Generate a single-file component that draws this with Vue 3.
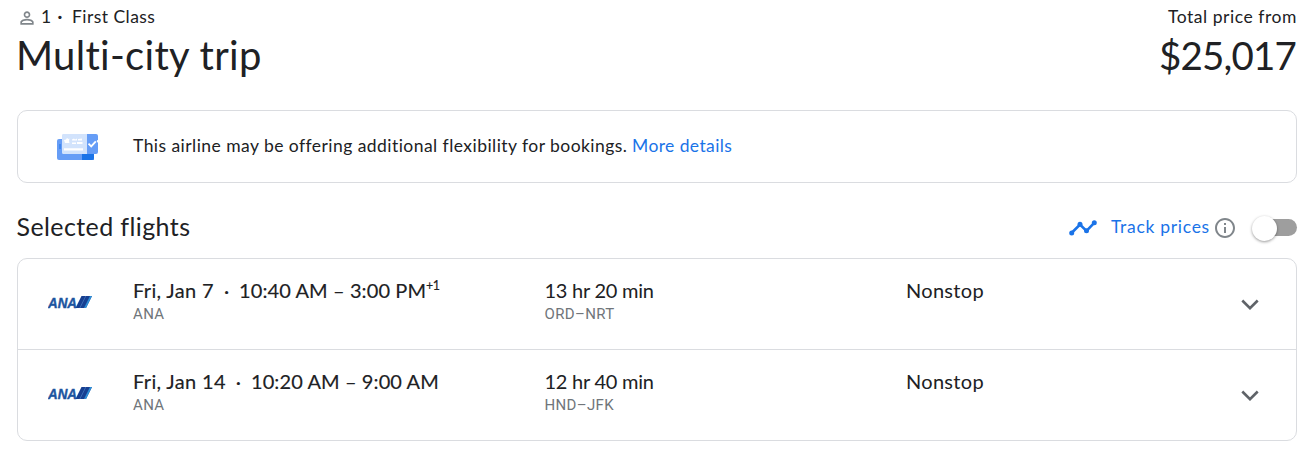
<template>
  <main class="trip">
    <header class="summary">
      <div class="summary-left">
        <div class="meta">
          <svg class="person" viewBox="0 0 24 24">
            <path d="M12 12c2.21 0 4-1.79 4-4s-1.79-4-4-4-4 1.79-4 4 1.79 4 4 4zm0-6c1.1 0 2 .9 2 2s-.9 2-2 2-2-.9-2-2 .9-2 2-2zm0 7c-2.67 0-8 1.34-8 4v3h16v-3c0-2.66-5.33-4-8-4zm6 5H6v-.99c.2-.72 3.3-2.01 6-2.01s5.8 1.29 6 2v1z" />
          </svg>
          <span class="count">1</span>
          <span class="meta-dot">·</span>
          <span class="cabin">First Class</span>
        </div>
        <h1 class="title">Multi-city trip</h1>
      </div>
      <div class="summary-right">
        <div class="price-label">Total price from</div>
        <div class="price">$25,017</div>
      </div>
    </header>

    <section class="banner">
      <svg class="tickets" viewBox="0 0 42 26">
        <path d="M2 5h35v21H2a2 2 0 0 1-2-2V7a2 2 0 0 1 2-2z" fill="#669df6" />
        <path d="M25 19h12v5a2 2 0 0 1-2 2H25z" fill="#1a73e8" />
        <path d="M3 10v5" stroke="#1a73e8" stroke-width="1" />
        <path d="M6 0h24v20H6a1.500 1.500 0 0 1-1-1.500v-17A1.500 1.500 0 0 1 6 0z" fill="#d2e3fc" />
        <path d="M30 0h9a2 2 0 0 1 2 2v4a1.200 1.200 0 0 0 0 2.500V18a2 2 0 0 1-2 2h-9z" fill="#669df6" />
        <path d="M7 14.200h19v2.200H7zM7 6l2-.5 1-1.500 1.500 1 1-.5-.5 2.500.5 2H8zM15 5.500l2-1 1 1 2-1v2h-5zM21 5l4-.5v2h-4zM15 8.500h4V10h-4zM20 8h5.500v2H20z" fill="#fff" />
        <path d="M31.500 9.700l2.700 2.700 4.600-5" fill="none" stroke="#fff" stroke-width="1.800" />
      </svg>
      <p class="banner-text">This airline may be offering additional flexibility for bookings.</p>
      <a class="more">More details</a>
    </section>

    <div class="section-head">
      <h2 class="section-title">Selected flights</h2>
      <div class="track">
        <svg class="trend" viewBox="0 0 28 16">
          <path d="M2.500 13L11 4.500l6.500 6.500L25.500 2.700" fill="none" stroke="#1a73e8" stroke-width="2.600" />
          <g fill="#1a73e8">
            <circle cx="2.700" cy="13" r="2.500" />
            <circle cx="11" cy="4.200" r="2.500" />
            <circle cx="17.500" cy="10.800" r="2.500" />
            <circle cx="25.300" cy="2.800" r="2.500" />
          </g>
        </svg>
        <span class="track-label">Track prices</span>
        <svg class="info" viewBox="0 0 24 24">
          <path d="M11 7h2v2h-2zm0 4h2v6h-2zm1-9C6.480 2 2 6.480 2 12s4.480 10 10 10 10-4.480 10-10S17.520 2 12 2zm0 18c-4.410 0-8-3.590-8-8s3.590-8 8-8 8 3.590 8 8-3.590 8-8 8z" />
        </svg>
        <span class="toggle"><span class="knob"></span></span>
      </div>
    </div>

    <section class="flights">
      <article v-for="flight in flights" :key="flight.date" class="flight">
        <svg class="logo" viewBox="0 0 44 14">
          <text x="0" y="12.500" class="logo-text" textLength="29" lengthAdjust="spacingAndGlyphs">ANA</text>
          <path d="M33.500 1H44l-6 12H27.500z" fill="#173f91" />
          <path d="M37.500 1h.6l-6 12h-.6z" fill="#4f83c6" />
          <path d="M42 1h2l-6 12h-2z" fill="#2f8fd6" />
        </svg>
        <div class="when">
          <div class="times">
            <span class="date">{{ flight.date }}</span>
            <span class="dot">·</span>
            <span class="hours">{{ flight.times }}<sup v-if="flight.plus" class="plus">{{ flight.plus }}</sup></span>
          </div>
          <div class="sub">{{ flight.airline }}</div>
        </div>
        <div class="duration">
          <div class="main length">{{ flight.duration }}</div>
          <div class="sub">{{ flight.route }}</div>
        </div>
        <div class="stops">
          <div class="main">{{ flight.stops }}</div>
        </div>
        <svg class="chevron" viewBox="0 0 18 11">
          <path d="M1.300 1.500L9 9.200l7.700-7.700" />
        </svg>
      </article>
    </section>
  </main>
</template>

<script setup>
const flights = [
  {
    date: 'Fri, Jan 7',
    times: '10:40 AM – 3:00 PM',
    plus: '+1',
    airline: 'ANA',
    duration: '13 hr 20 min',
    route: 'ORD–NRT',
    stops: 'Nonstop'
  },
  {
    date: 'Fri, Jan 14',
    times: '10:20 AM – 9:00 AM',
    airline: 'ANA',
    duration: '12 hr 40 min',
    route: 'HND–JFK',
    stops: 'Nonstop'
  }
]
</script>

<style>
body {
  background: #fff;
}
</style>

<style scoped>
.trip {
  box-sizing: border-box;
  width: 1316px;
  height: 452px;
  padding: 4px 19px 0 17px;
  overflow: hidden;
  color: #202124;
  font-family: Lato, 'Open Sans', sans-serif;
  font-size: 17.5px;
}
.summary {
  display: flex;
  justify-content: space-between;
  height: 106px;
  white-space: nowrap;
}
.meta {
  display: flex;
  align-items: center;
  height: 26px;
  line-height: 26px;
}
.person {
  width: 20px;
  height: 20px;
  margin-top: 2px;
  fill: #80868b;
}
.count {
  width: 11px;
  margin-left: 4px;
}
.meta-dot {
  width: 16px;
  margin-right: 4px;
  font-weight: 700;
  text-align: center;
}
.cabin {
  letter-spacing: 0.45px;
}
.title {
  margin: 0 0 0 -1px;
  font-size: 40px;
  font-weight: 400;
  line-height: 50px;
  letter-spacing: 0.3px;
}
.summary-right {
  text-align: right;
}
.price-label {
  line-height: 26px;
  letter-spacing: 0.55px;
}
.price {
  margin-right: 1px;
  font-size: 38.5px;
  line-height: 51px;
  letter-spacing: -0.8px;
}
.banner {
  box-sizing: border-box;
  display: flex;
  align-items: center;
  width: 1280px;
  height: 73px;
  padding-left: 39px;
  border: 1px solid #dadce0;
  border-radius: 10px;
  white-space: nowrap;
}
.tickets {
  width: 42px;
  height: 26px;
  margin-right: 34px;
}
.banner-text {
  width: 499px;
  margin: 0;
  padding-bottom: 2px;
  letter-spacing: 0.45px;
}
.more {
  padding-bottom: 2px;
  color: #1a73e8;
  letter-spacing: 0.4px;
}
.section-head {
  display: flex;
  align-items: center;
  justify-content: space-between;
  height: 75px;
}
.section-title {
  margin: 11px 0 0 -0.5px;
  font-size: 25px;
  font-weight: 400;
  line-height: 32px;
  letter-spacing: 0.4px;
}
.track {
  display: flex;
  align-items: center;
  height: 26px;
  margin-top: 14px;
}
.trend {
  width: 28px;
  height: 16px;
  margin-right: 14px;
}
.track-label {
  width: 102px;
  padding-bottom: 2px;
  color: #1a73e8;
  letter-spacing: 0.7px;
  white-space: nowrap;
}
.info {
  width: 24px;
  height: 24px;
  margin-right: 15px;
  fill: #80868b;
}
.toggle {
  display: flex;
  align-items: center;
  width: 45px;
  height: 17px;
  border-radius: 9px;
  background: linear-gradient(90deg, transparent 12px, #9e9e9e 12px);
}
.knob {
  flex: none;
  width: 25px;
  height: 25px;
  margin-top: 2px;
  border-radius: 50%;
  background: #fff;
  box-shadow: 0 1px 3px rgba(0, 0, 0, 0.4);
}
.flights {
  box-sizing: border-box;
  width: 1280px;
  height: 183px;
  border: 1px solid #dadce0;
  border-radius: 10px;
}
.flight {
  box-sizing: border-box;
  display: flex;
  height: 90px;
  padding: 20px 37px 0 30px;
  white-space: nowrap;
}
.flight + .flight {
  height: 91px;
  border-top: 1px solid #dadce0;
}
.logo {
  width: 44px;
  height: 14px;
  margin: 16px 41px 0 0;
}
.logo-text {
  fill: #1c559f;
  stroke: #1c559f;
  stroke-width: 0.4px;
  font: italic 700 14.5px 'Liberation Sans', sans-serif;
}
.when {
  width: 411.5px;
}
.times,
.main {
  height: 25px;
  font-size: 20px;
  line-height: 23px;
}
.times {
  display: flex;
  -webkit-text-stroke: 0.15px #202124;
}
.date {
  letter-spacing: 0.35px;
}
.dot {
  width: 25px;
  text-align: center;
}
.hours {
  letter-spacing: 0.1px;
}
.plus {
  font-size: 12.5px;
  line-height: 0;
  letter-spacing: -0.6px;
}
.duration {
  width: 361.5px;
}
.main {
  letter-spacing: 0.3px;
}
.length {
  letter-spacing: -0.25px;
}
.sub {
  color: #70757a;
  font-family: Roboto, sans-serif;
  font-size: 15px;
  line-height: 20px;
  letter-spacing: 0.35px;
}
.chevron {
  width: 18px;
  height: 11px;
  margin: 20px 0 0 auto;
  fill: none;
  stroke: #5f6368;
  stroke-width: 2.6px;
}
</style>
